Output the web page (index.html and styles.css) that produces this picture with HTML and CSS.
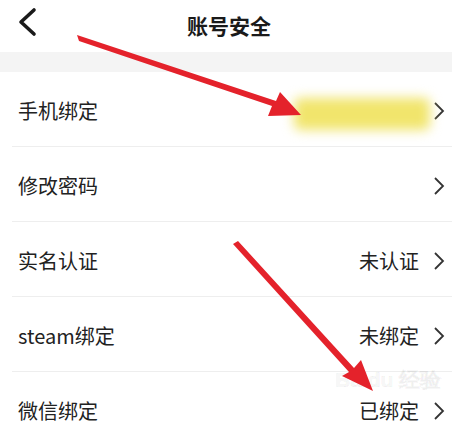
FILE: index.html
```html
<html>
<head>
<meta content="text/html;charset=utf-8" http-equiv="Content-Type" />
<link rel="stylesheet" href="styles.css">
</head>
<body>
<div class="page">
	<div class="topbar">
		<svg class="back" width="20" height="30" viewBox="0 0 20 30">
			<polyline points="16,3 3,15 16,27" fill="none" stroke="#1a1a1a" stroke-width="3.6" stroke-linecap="round" stroke-linejoin="round" />
		</svg>
		<div class="title">账号安全</div>
	</div>
	<div class="band"></div>

	<div class="list">
		<div class="row">
			<span class="label">手机绑定</span>
			<span class="value"></span>
			<svg class="chev" width="12" height="20" viewBox="0 0 12 20"><polyline points="2,2 10,10 2,18" fill="none" stroke="#333" stroke-width="1.8" /></svg>
		</div>
		<div class="row">
			<span class="label">修改密码</span>
			<span class="value"></span>
			<svg class="chev" width="12" height="20" viewBox="0 0 12 20"><polyline points="2,2 10,10 2,18" fill="none" stroke="#333" stroke-width="1.8" /></svg>
		</div>
		<div class="row">
			<span class="label">实名认证</span>
			<span class="value">未认证</span>
			<svg class="chev" width="12" height="20" viewBox="0 0 12 20"><polyline points="2,2 10,10 2,18" fill="none" stroke="#333" stroke-width="1.8" /></svg>
		</div>
		<div class="row">
			<span class="label">steam绑定</span>
			<span class="value">未绑定</span>
			<svg class="chev" width="12" height="20" viewBox="0 0 12 20"><polyline points="2,2 10,10 2,18" fill="none" stroke="#333" stroke-width="1.8" /></svg>
		</div>
		<div class="row">
			<span class="label">微信绑定</span>
			<span class="value">已绑定</span>
			<svg class="chev" width="12" height="20" viewBox="0 0 12 20"><polyline points="2,2 10,10 2,18" fill="none" stroke="#333" stroke-width="1.8" /></svg>
		</div>
	</div>

	<!-- overlays: blurred number, watermark, annotation arrows -->
	<div class="smudge"></div>
	<div class="watermark">Bai<span class="du">du</span> 经验</div>
	<svg class="arrows" width="452" height="428" viewBox="0 0 452 428">
		<polygon points="77,35 79,41 272,106 268,116 301,115 280,92 276,101" fill="#e4222b" />
		<polygon points="233,244 238,241 354,368 361,360 373,391 342,376 349,372" fill="#e4222b" />
	</svg>
</div>
</body>
</html>
```

FILE: styles.css
```css
html, body {
	margin:0;
	padding:0;
	background-color:#FFF;
}

.page {
	position:relative;
	width:452px;
	height:428px;
	overflow:hidden;
	font-family: "Noto Sans CJK SC", "Noto Sans", sans-serif;
	color:#222;
}

.topbar {
	height:52px;
	display:flex;
	align-items:center;
	justify-content:center;
	position:relative;
}
.back {
	position:absolute;
	left:18px;
	top:7px;
}
.title {
	font-size:21px;
	font-weight:bold;
	color:#1a1a1a;
	margin-left:6px;
	margin-top:-3px;
}

.band {
	height:20px;
	background-color:#F4F4F4;
}

.list {
	padding-left:12px;
}
.row {
	border-bottom:1px solid #EEE;
	display:flex;
	align-items:center;
	padding-left:6px;
	padding-right:7px;
	padding-top:3px;
	box-sizing:border-box;
	height:75px;
}
.label {
	font-size:20px;
	flex:1;
}
.value {
	font-size:20px;
	color:#222;
	margin-right:14px;
}
.chev {
	display:block;
}

.smudge {
	position:absolute;
	left:294px;
	top:98px;
	width:136px;
	height:32px;
	background-color:#F1E56C;
	filter:blur(6px);
	border-radius:6px;
}
.watermark {
	position:absolute;
	left:335px;
	top:366px;
	font-family:"Liberation Sans", sans-serif;
	font-size:21px;
	font-weight:bold;
	color:rgba(0,0,0,0.03);
	-webkit-text-stroke:1px rgba(0,0,0,0.05);
	white-space:nowrap;
}
.arrows {
	position:absolute;
	left:0;
	top:0;
}
```
